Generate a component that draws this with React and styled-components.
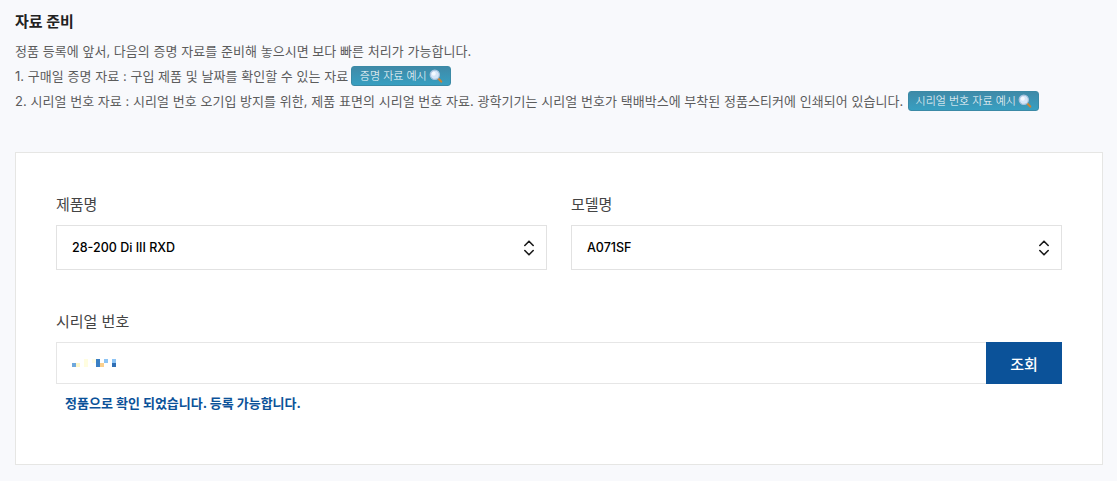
import React from "react";
import styled, { createGlobalStyle } from "styled-components";

const GlobalStyle = createGlobalStyle`
  html, body {
    margin: 0;
    padding: 0;
    background: #f8f9fc;
    font-family: Inter, "Noto Sans CJK KR", sans-serif;
  }
`;

const MOSAIC = [
  [0, 4, "#6fa8dc"],
  [4, 4, "#fdf6c8"],
  [12, 0, "#fffde0"],
  [12, 4, "#fffde0"],
  [20, 0, "#fffde6"],
  [24, 0, "#3a7fc4"],
  [24, 4, "#3a7fc4"],
  [28, 4, "#fbd08e"],
  [32, 0, "#8cc4f5"],
  [40, 0, "#8cc4f5"],
  [40, 4, "#2f6fb5"],
];

const SearchIcon = () => (
  <Glass viewBox="0 0 14 14" aria-hidden="true">
    <path d="M8.8 9l3.4 3.6" stroke="#c98436" strokeWidth="2.2" strokeLinecap="round" />
    <circle cx="5.8" cy="5.8" r="4.6" fill="#d5e6f8" stroke="#a9c3de" strokeWidth="1.2" />
    <circle cx="4.8" cy="4.8" r="2" fill="#f4f9ff" />
  </Glass>
);

const UpDownIcon = () => (
  <svg width="12" height="18" viewBox="0 0 12 18" fill="none" aria-hidden="true">
    <path
      d="M1.8 6.5L6 2.2l4.2 4.3M1.8 11.5L6 15.8l4.2-4.3"
      stroke="#1a1a1a"
      strokeWidth="1.6"
      strokeLinecap="round"
      strokeLinejoin="round"
    />
  </svg>
);

const App = () => {
  return (
    <Page>
      <GlobalStyle />
      <Notice>
        <Title>자료 준비</Title>
        <Line>정품 등록에 앞서, 다음의 증명 자료를 준비해 놓으시면 보다 빠른 처리가 가능합니다.</Line>
        <Line>
          1. 구매일 증명 자료 : 구입 제품 및 날짜를 확인할 수 있는 자료
          <SampleButton $width={100} $left={3}>
            증명 자료 예시 <SearchIcon />
          </SampleButton>
        </Line>
        <Line>
          2. 시리얼 번호 자료 : 시리얼 번호 오기입 방지를 위한, 제품 표면의 시리얼 번호 자료. 광학기기는 시리얼 번호가 택배박스에 부착된 정품스티커에 인쇄되어 있습니다.
          <SampleButton $width={131} $left={5}>
            시리얼 번호 자료 예시 <SearchIcon />
          </SampleButton>
        </Line>
      </Notice>

      <Panel>
        <SelectRow>
          <Field>
            <Label>제품명</Label>
            <SelectBox>
              28-200 Di III RXD
              <UpDownIcon />
            </SelectBox>
          </Field>
          <Field>
            <Label>모델명</Label>
            <SelectBox>
              A071SF
              <UpDownIcon />
            </SelectBox>
          </Field>
        </SelectRow>

        <SerialField>
          <Label>시리얼 번호</Label>
          <SerialRow>
            <SerialInput>
              <svg width="44" height="8" viewBox="0 0 44 8" aria-hidden="true">
                {MOSAIC.map(([x, y, color], i) => (
                  <rect key={i} x={x} y={y} width="4" height="4" fill={color} />
                ))}
              </svg>
            </SerialInput>
            <LookupButton>조회</LookupButton>
          </SerialRow>
          <Message>정품으로 확인 되었습니다. 등록 가능합니다.</Message>
        </SerialField>
      </Panel>
    </Page>
  );
};

const Page = styled.div`
  box-sizing: border-box;
  width: 1117px;
  height: 481px;
  padding: 11px 14px 0 15px;
  overflow: hidden;
`;

const Notice = styled.div`
  height: 141px;
`;

const Title = styled.h3`
  margin: 0 0 6px;
  font-size: 15px;
  line-height: 22px;
  font-weight: 700;
  color: #222;
`;

const Line = styled.p`
  margin: 0;
  height: 25px;
  font-size: 13px;
  letter-spacing: 0.04px;
  line-height: 25px;
  color: #5c5c5c;
  white-space: nowrap;
`;

const SampleButton = styled.span`
  display: inline-flex;
  align-items: center;
  justify-content: center;
  gap: 2px;
  box-sizing: border-box;
  width: ${(p) => p.$width}px;
  height: 20px;
  margin-left: ${(p) => p.$left}px;
  vertical-align: 1px;
  border: 1px solid #3b8aa6;
  border-radius: 3px;
  background: linear-gradient(#3f8aa8, #379fc1);
  color: #fff;
  font-size: 11px;
  font-weight: 300;
  letter-spacing: 0;
  line-height: 18px;
`;

const Glass = styled.svg`
  width: 14px;
  height: 14px;
  flex: none;
`;

const Panel = styled.div`
  box-sizing: border-box;
  width: 1088px;
  height: 313px;
  padding: 40px 40px 0;
  background: #fff;
  border: 1px solid #e6e6e4;
`;

const SelectRow = styled.div`
  display: grid;
  grid-template-columns: 491px 491px;
  gap: 24px;
`;

const Field = styled.div`
  display: flex;
  flex-direction: column;
`;

const SerialField = styled(Field)`
  margin-top: 40px;
`;

const Label = styled.label`
  height: 24px;
  margin-bottom: 8px;
  font-size: 15px;
  line-height: 24px;
  color: #444;
`;

const SelectBox = styled.div`
  display: flex;
  align-items: center;
  justify-content: space-between;
  box-sizing: border-box;
  height: 45px;
  padding: 0 11px 0 15px;
  border: 1px solid #e2e2e2;
  background: #fff;
  font-size: 12.5px;
  font-weight: 450;
  color: #000;
`;

const SerialRow = styled.div`
  display: flex;
  width: 1006px;
  height: 42px;
`;

const SerialInput = styled.div`
  display: flex;
  align-items: center;
  flex: 1;
  box-sizing: border-box;
  padding: 0 15px;
  border: 1px solid #e6e6e6;
  border-right: none;
  background: #fff;
`;

const LookupButton = styled.button`
  width: 76px;
  border: none;
  padding: 0;
  background: #0b5299;
  color: #fff;
  font-family: inherit;
  font-size: 15px;
  font-weight: 500;
  cursor: pointer;
`;

const Message = styled.p`
  margin: 9px 0 0 9px;
  font-size: 13px;
  line-height: 20px;
  font-weight: 700;
  color: #0b5299;
`;

export default App;
